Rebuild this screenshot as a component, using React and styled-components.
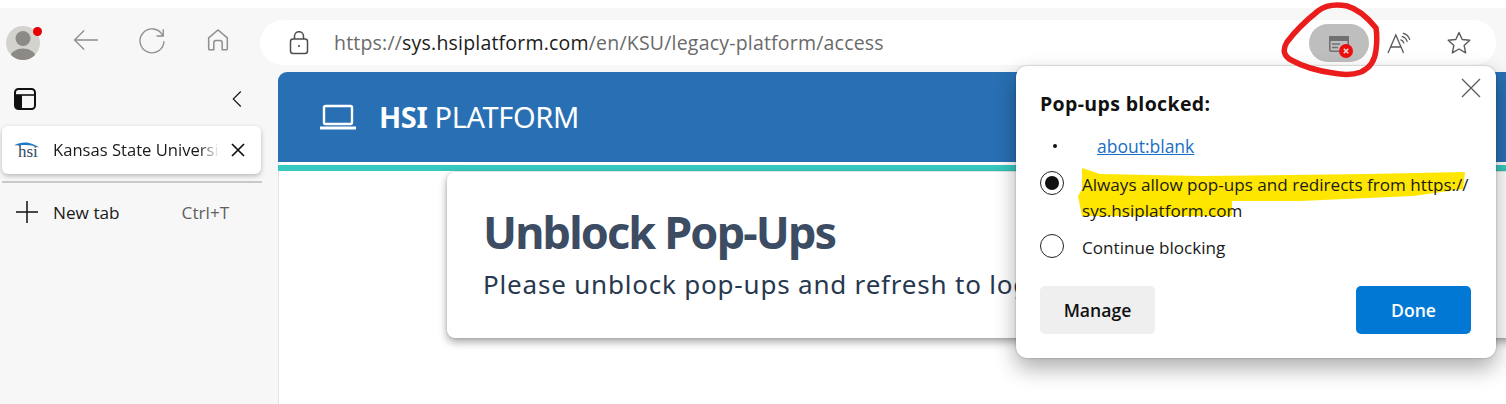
import React from 'react';
import styled, { createGlobalStyle } from 'styled-components';

const Global = createGlobalStyle`
  html, body { margin: 0; padding: 0; background: #fff; }
  body { font-family: "Open Sans", "Noto Sans", sans-serif; overflow: hidden; }
  * { box-sizing: border-box; }
`;

const Page = styled.div`
  position: relative;
  width: 1506px;
  height: 404px;
  padding-top: 8px;
  overflow: hidden;
  background: #fff;
`;

const Chrome = styled.div`
  height: 396px;
  background: #f7f7f7;
  display: grid;
  grid-template-columns: 278px 1fr;
  grid-template-rows: 64px 1fr;
`;

/* ---- toolbar ---- */
const Toolbar = styled.div`
  grid-column: 1 / 3;
  display: flex;
  align-items: center;
  padding: 0 10px 0 6px;
`;

const Avatar = styled.div`
  position: relative;
  width: 34px;
  height: 34px;
  margin-top: 5px;
  flex: none;
`;

const Dot = styled.span`
  position: absolute;
  top: 1px;
  right: -2px;
  width: 9px;
  height: 9px;
  border-radius: 50%;
  background: #e60000;
`;

const NavButton = styled.div`
  width: 32px;
  height: 32px;
  margin-left: ${p => p.$gap}px;
  flex: none;
  display: flex;
  align-items: center;
  justify-content: center;
  color: #8f8f8f;
`;

const AddressBar = styled.div`
  margin-left: 26px;
  flex: 1;
  height: 45px;
  margin-top: 5px;
  border-radius: 23px;
  background: #fff;
  display: flex;
  align-items: center;
  padding-left: 29px;
  padding-right: 24px;
`;

const Url = styled.div`
  margin-left: 25px;
  flex: 1;
  font-size: 19.5px;
  letter-spacing: 0.2px;
  color: #6a6a6a;
  white-space: nowrap;
  span { color: #1b1b1b; }
`;

const PopupPill = styled.div`
  width: 60px;
  height: 38px;
  border-radius: 19px;
  background: #bebebe;
  display: flex;
  align-items: center;
  justify-content: center;
  flex: none;
`;

const BarIcon = styled.div`
  margin-left: ${p => p.$gap}px;
  display: flex;
  flex: none;
  color: #555;
`;

/* ---- sidebar ---- */
const Sidebar = styled.div`
  display: flex;
  flex-direction: column;
`;

const SideHead = styled.div`
  height: 54px;
  display: flex;
  align-items: center;
  justify-content: space-between;
  padding: 0 32px 0 14px;
`;

const Tab = styled.div`
  margin-left: 2px;
  width: 259px;
  height: 48px;
  border-radius: 6px;
  background: #fff;
  box-shadow: 0 2px 5px rgba(0, 0, 0, 0.25);
  display: flex;
  align-items: center;
  padding-left: 12px;
  padding-right: 15px;
`;

const TabTitle = styled.div`
  margin-left: 13px;
  padding-bottom: 2px;
  white-space: nowrap;
  font-size: 16.6px;
  color: #1a1a1a;
  -webkit-mask-image: linear-gradient(to right, #000 88%, transparent 100%);
  mask-image: linear-gradient(to right, #000 88%, transparent 100%);
`;

const TabClose = styled.div`
  margin-left: auto;
  display: flex;
`;

const Rule = styled.div`
  margin: 7px 16px 0 2px;
  height: 2px;
  background: #c9c9c9;
`;

const NewTab = styled.div`
  display: flex;
  align-items: center;
  height: 58px;
  padding-left: 15px;
  font-size: 17.2px;
  color: #1a1a1a;
`;

const NewTabLabel = styled.span`
  margin-left: 14px;
`;

const Shortcut = styled.span`
  margin-left: 62px;
  color: #606060;
`;

/* ---- page content ---- */
const Content = styled.div`
  background: #fff;
  box-shadow: inset 1px 0 0 #e4e4e4;
  border-top-left-radius: 9px;
  overflow: hidden;
`;

const SiteHeader = styled.div`
  height: 90px;
  background: #2870b3;
  color: #fff;
  display: flex;
  align-items: center;
  padding-left: 42px;
`;

const Brand = styled.div`
  margin-left: 23px;
  padding-bottom: 2px;
  font-family: "Noto Sans", sans-serif;
  font-size: 29px;
  letter-spacing: -0.38px;
  b { font-weight: 700; }
`;

const Teal = styled.div`
  margin-top: 3px;
  height: 6px;
  background: #37c9bf;
`;

const Card = styled.div`
  margin-left: 169px;
  margin-top: 1px;
  width: 1100px;
  height: 166px;
  border-radius: 8px;
  background: #fff;
  padding: 31px 36px;
  box-shadow: 0 4px 8px rgba(0, 0, 0, 0.35), 0 0 3px rgba(0, 0, 0, 0.15);
`;

const Heading = styled.h1`
  margin: 0;
  font-family: "Noto Sans", sans-serif;
  font-size: 45px;
  line-height: 58px;
  font-weight: 700;
  letter-spacing: -1.85px;
  color: #3b4c63;
`;

const SubText = styled.p`
  margin: 5px 0 0;
  font-family: "Noto Sans", sans-serif;
  font-size: 26px;
  line-height: 36px;
  letter-spacing: 0.8px;
  color: #27384f;
`;

/* ---- popup ---- */
const Popup = styled.div`
  position: absolute;
  left: 1016px;
  top: 66px;
  width: 480px;
  height: 292px;
  border-radius: 11px;
  background: #fff;
  padding: 24px 25px 24px 24px;
  box-shadow: 0 0 2px rgba(0, 0, 0, 0.3), 0 10px 22px rgba(0, 0, 0, 0.33);
`;

const PopupClose = styled.div`
  position: absolute;
  top: 10px;
  right: 13px;
  display: flex;
  color: #5c5c5c;
`;

const PopupTitle = styled.div`
  font-size: 19.5px;
  line-height: 28px;
  letter-spacing: 0.35px;
  font-weight: 700;
  color: #111;
`;

const SiteRow = styled.div`
  display: flex;
  align-items: center;
  margin-top: 14px;
  height: 28px;
`;

const Bullet = styled.span`
  margin-left: 13px;
  width: 4px;
  height: 4px;
  border-radius: 50%;
  background: #111;
`;

const SiteLink = styled.a`
  margin-left: 40px;
  font-size: 17.5px;
  color: #1a6fc4;
  text-decoration: underline;
`;

const Option = styled.div`
  position: relative;
  display: flex;
  align-items: flex-start;
  margin-top: ${p => p.$top}px;
`;

const Radio = styled.span`
  width: 24px;
  height: 24px;
  flex: none;
  border-radius: 50%;
  border: 1.5px solid #222;
  display: flex;
  align-items: center;
  justify-content: center;
  &::after {
    content: '';
    display: ${p => (p.$on ? 'block' : 'none')};
    width: 14px;
    height: 14px;
    border-radius: 50%;
    background: #111;
  }
`;

const OptionText = styled.span`
  position: relative;
  margin-left: 18px;
  padding-top: 1px;
  font-size: 17.1px;
  line-height: 26px;
  color: #1a1a1a;
`;

const Highlight = styled.svg`
  position: absolute;
  left: 34px;
  top: -12px;
`;

const Buttons = styled.div`
  display: flex;
  justify-content: space-between;
  margin-top: 25px;
`;

const Btn = styled.button`
  width: 115px;
  height: 48px;
  border: none;
  border-radius: 5px;
  font-family: inherit;
  font-size: 17.6px;
  font-weight: 600;
  background: ${p => (p.$primary ? '#0078d4' : '#efefef')};
  color: ${p => (p.$primary ? '#fff' : '#111')};
`;

const Scribble = styled.svg`
  position: absolute;
  left: 1270px;
  top: 0;
  pointer-events: none;
`;

const Stroke = ({ size = 24, w = 1.5, children, style }) => (
  <svg width={size} height={size} viewBox="0 0 24 24" fill="none" stroke="currentColor" strokeWidth={w} style={style}>
    {children}
  </svg>
);

export default function App() {
  return (
    <Page>
      <Global />
      <Chrome>
        <Toolbar>
          <Avatar>
            <svg width="34" height="34" viewBox="0 0 34 34">
              <defs>
                <clipPath id="av"><circle cx="17" cy="17" r="17" /></clipPath>
              </defs>
              <circle cx="17" cy="17" r="17" fill="#d3d2cf" />
              <g clipPath="url(#av)" fill="#8d8a86">
                <circle cx="17" cy="12.5" r="7.5" />
                <ellipse cx="17" cy="31" rx="12.5" ry="8.5" />
              </g>
            </svg>
            <Dot />
          </Avatar>
          <NavButton $gap={30}>
            <Stroke size={30} w={1.1}><path d="M21.5 12H2.8M10.5 4.4 2.8 12l7.7 7.6" /></Stroke>
          </NavButton>
          <NavButton $gap={34}>
            <Stroke size={30} w={1.1}><path d="M20.6 8.4A9.6 9.6 0 1 0 21.6 13M21 3.4v5.4h-5.4" /></Stroke>
          </NavButton>
          <NavButton $gap={34}>
            <Stroke size={28} w={1.3}><path d="M4 19.4V10.2L12 3.4l8 6.8v9.2a1 1 0 0 1-1 1h-3.4v-6a2 2 0 0 0-2-2h-3.2a2 2 0 0 0-2 2v6H5a1 1 0 0 1-1-1Z" /></Stroke>
          </NavButton>
          <AddressBar>
            <svg width="20" height="24" viewBox="0 0 20 24" fill="none" stroke="#4d4d4d" strokeWidth="1.5">
              <rect x="1.5" y="8" width="17" height="14.5" rx="2.5" />
              <path d="M5.5 8V5.2a4.5 4.5 0 0 1 9 0V8" />
              <circle cx="10" cy="15" r="1.1" fill="#4d4d4d" stroke="none" />
            </svg>
            <Url>https://<span>sys.hsiplatform.com</span>/en/KSU/legacy-platform/access</Url>
            <PopupPill>
              <svg width="28" height="28" viewBox="0 0 28 28" style={{ overflow: 'visible' }}>
                <rect x="4.8" y="7.8" width="18.4" height="14.4" rx="1.2" fill="none" stroke="#707070" strokeWidth="1.6" />
                <path d="M4 8.2A1.2 1.2 0 0 1 5.2 7h17.6A1.2 1.2 0 0 1 24 8.2V12H4Z" fill="#707070" />
                <path d="M7 15h8M7 18.5h6" stroke="#707070" strokeWidth="1.4" />
                <circle cx="21" cy="22" r="7" fill="#ec0d0d" />
                <path d="m18.8 19.8 4.4 4.4m0-4.4-4.4 4.4" stroke="#f3dcdc" strokeWidth="1.6" />
              </svg>
            </PopupPill>
            <BarIcon $gap={17}>
              <svg width="26" height="26" viewBox="0 0 26 26" fill="none" stroke="#5a5a5a" strokeWidth="1.3">
                <path d="M2 23 9.8 5l7.8 18M5 17h9.8" />
                <path d="M16 8.2c1.7.5 3 1.8 3.5 3.6M17.2 4.8c3 .8 4.9 2.8 5.6 5.6M18.4 1.6c3.8 1 6 3.4 6.9 6.8" transform="translate(-1.5 1.5)" />
              </svg>
            </BarIcon>
            <BarIcon $gap={34}>
              <svg width="26" height="26" viewBox="0 0 26 26" fill="none" stroke="#5a5a5a" strokeWidth="1.4">
                <path d="m13 2.5 3.2 7 7.6.8-5.7 5.1 1.6 7.5L13 19l-6.7 3.9 1.6-7.5-5.7-5.1 7.6-.8Z" strokeLinejoin="round" />
              </svg>
            </BarIcon>
          </AddressBar>
        </Toolbar>

        <Sidebar>
          <SideHead>
            <svg width="22" height="22" viewBox="0 0 22 22">
              <rect x="1" y="1" width="20" height="20" rx="3.5" fill="none" stroke="#111" strokeWidth="2" />
              <path d="M1 7h20" stroke="#111" strokeWidth="1.6" />
              <path d="M1 7h7v14H4a3 3 0 0 1-3-3Z" fill="#111" />
            </svg>
            <Stroke size={18} w={1.5} style={{ color: '#111' }}><path d="M17 2 7 12l10 10" /></Stroke>
          </SideHead>
          <Tab>
            <svg width="26" height="22" viewBox="0 0 26 22">
              <path d="M0 6.5C5 3.5 11 3 15 4c4 1 8 2.500 10 4.500C20 6.500 14 5.800 10 6c-4 .1-7 .2-10 .5Z" fill="#1e78c8" />
              <text x="4" y="18" fontFamily="'Liberation Serif', serif" fontSize="17" fill="#33495f">hsi</text>
            </svg>
            <TabTitle>Kansas State Universi</TabTitle>
            <TabClose>
              <Stroke size={16} w={2.6} style={{ color: '#111' }}><path d="M3 3l18 18M21 3 3 21" /></Stroke>
            </TabClose>
          </Tab>
          <Rule />
          <NewTab>
            <Stroke size={24} w={1.5} style={{ color: '#111' }}><path d="M12 1v22M1 12h22" /></Stroke>
            <NewTabLabel>New tab</NewTabLabel>
            <Shortcut>Ctrl+T</Shortcut>
          </NewTab>
        </Sidebar>

        <Content>
          <SiteHeader>
            <svg width="36" height="26" viewBox="0 0 36 26" fill="none" stroke="#fff" strokeWidth="2.4">
              <rect x="4" y="2" width="28" height="18" rx="1.5" />
              <path d="M0 24h36" strokeWidth="3" />
            </svg>
            <Brand><b>HSI</b> PLATFORM</Brand>
          </SiteHeader>
          <Teal />
          <Card>
            <Heading>Unblock Pop-Ups</Heading>
            <SubText>Please unblock pop-ups and refresh to login.</SubText>
          </Card>
        </Content>
      </Chrome>

      <Popup>
        <PopupClose>
          <Stroke size={24} w={1.3}><path d="M3 3l18 18M21 3 3 21" /></Stroke>
        </PopupClose>
        <PopupTitle>Pop-ups blocked:</PopupTitle>
        <SiteRow>
          <Bullet />
          <SiteLink href="#">about:blank</SiteLink>
        </SiteRow>
        <Option $top={11}>
          <Highlight width="400" height="60" viewBox="0 0 400 60">
            <path d="M8 9 26 15 126 17 293 15 391 13 389 30 339 37 226 42 158 42 158 57 59 57 8 57 4 37 8 30Z" fill="#ffe600" />
          </Highlight>
          <Radio $on />
          <OptionText>Always allow pop-ups and redirects from https://<br />sys.hsiplatform.com</OptionText>
        </Option>
        <Option $top={10}>
          <Radio />
          <OptionText>Continue blocking</OptionText>
        </Option>
        <Buttons>
          <Btn>Manage</Btn>
          <Btn $primary>Done</Btn>
        </Buttons>
      </Popup>

      <Scribble width="120" height="80" viewBox="1270 0 120 80" fill="none">
        <path d="M1376 28C1368 18 1358 9 1347 6 1336 4 1326 5 1318 11 1308 19 1296 30 1287 42 1282 50 1284 56 1291 60 1302 66 1318 71 1333 73 1343 75 1353 75 1361 72 1370 68 1375 60 1376 50 1377 42 1377 34 1376 28Z" stroke="#ea1c1c" strokeWidth="5.5" strokeLinejoin="round" />
      </Scribble>
    </Page>
  );
}
